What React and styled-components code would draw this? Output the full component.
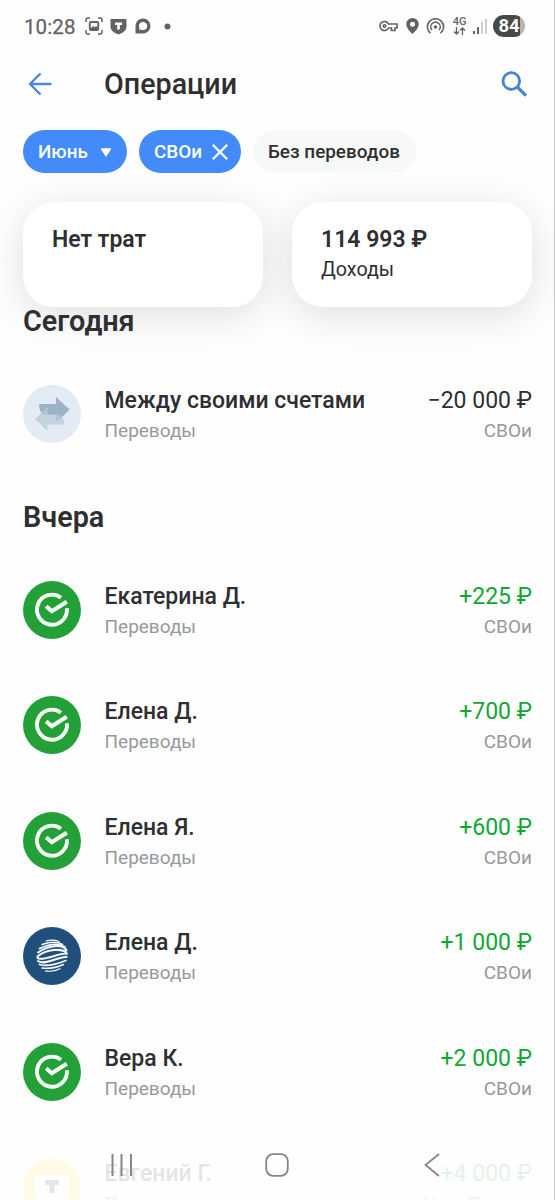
import React from 'react';
import styled, { createGlobalStyle } from 'styled-components';

const GlobalStyle = createGlobalStyle`
  * { box-sizing: border-box; }
  body { margin: 0; background: #fefefe; font-family: Roboto, "Liberation Sans", sans-serif; color: #2f2f31; }
`;

const Screen = styled.main`
  position: relative;
  width: 555px;
  height: 1200px;
  overflow: hidden;
  background: #fefefe;
  border-right: 1px solid #c4c4c4;
  display: flex;
  flex-direction: column;
`;

const StatusBar = styled.header`
  height: 52px;
  flex: none;
  display: flex;
  align-items: center;
  justify-content: space-between;
  padding: 0 29px 0 24px;
  color: #626262;
`;

const StatusGroup = styled.div`
  display: flex;
  align-items: center;
`;

const Clock = styled.span`
  font-size: 20.5px;
  line-height: 24px;
  width: 61px;
  padding-top: 1px;
  letter-spacing: 0.1px;
  -webkit-text-stroke: 0.25px currentColor;
`;

const StatusIcon = styled.svg`
  display: block;
  flex: none;
  margin-left: ${(p) => p.$gap || 0}px;
`;

const Network = styled.div`
  display: flex;
  flex-direction: column;
  align-items: center;
  width: 15px;
  margin-left: 7px;
  font-size: 11px;
  font-weight: 500;
  line-height: 10px;
`;

const Battery = styled.div`
  width: 32px;
  height: 22px;
  margin-left: 6px;
  border-radius: 11px;
  background: linear-gradient(90deg, #484848 84%, #b3b3b3 84%);
  color: #fff;
  font-size: 18.5px;
  font-weight: 700;
  line-height: 23px;
  text-align: center;
`;

const TitleBar = styled.div`
  height: 64px;
  flex: none;
  display: flex;
  align-items: center;
  padding: 0 27px 0 28px;
`;

const Title = styled.h1`
  flex: 1;
  margin: 0 0 0 52px;
  font-size: 28.7px;
  line-height: 34px;
  font-weight: 500;
`;

const Filters = styled.div`
  height: 58px;
  flex: none;
  display: flex;
  align-items: flex-start;
  gap: 12px;
  padding: 14px 23px 0;
`;

const Chip = styled.button`
  display: flex;
  align-items: center;
  justify-content: space-between;
  width: ${(p) => p.$width}px;
  height: 43px;
  padding: 1px ${(p) => p.$end || 15}px 0 15px;
  border: 0;
  border-radius: 22px;
  background: ${(p) => (p.$active ? '#438afa' : '#f7f8f8')};
  color: ${(p) => (p.$active ? '#fff' : '#2f2f31')};
  font: 500 18.9px/24px Roboto, "Liberation Sans", sans-serif;
  white-space: nowrap;
`;

const Summary = styled.section`
  flex: none;
  display: grid;
  grid-template-columns: 240px 240px;
  gap: 29px;
  padding: 28px 23px 0;
`;

const SummaryCard = styled.article`
  height: 105px;
  padding: 23px 29px;
  border-radius: 31px;
  background: #fff;
  box-shadow: 0 8px 40px rgba(0, 0, 0, 0.13);
`;

const SummaryValue = styled.div`
  font-size: 23px;
  font-weight: 600;
  line-height: 29px;
`;

const SummaryLabel = styled.div`
  margin-top: 2px;
  font-size: 19.7px;
  line-height: 28px;
`;

const DayTitle = styled.h2`
  position: relative;
  flex: none;
  height: 34px;
  margin: ${(p) => p.$top}px 0 19px;
  padding-left: 23px;
  font-size: 28.8px;
  line-height: 34px;
  font-weight: 600;
`;

const Row = styled.article`
  flex: none;
  height: 115.4px;
  display: flex;
  align-items: flex-start;
  padding: 28px 22px 0 23px;
`;

const Avatar = styled.svg`
  width: 58px;
  height: 58px;
  flex: none;
`;

const Details = styled.div`
  flex: 1;
  margin-left: 23.5px;
  padding-top: 1px;
`;

const Payment = styled.div`
  padding-top: 1px;
  text-align: right;
`;

const Name = styled.div`
  font-size: 23px;
  font-weight: 500;
  line-height: 30px;
  white-space: nowrap;
`;

const Amount = styled.div`
  font-size: 23px;
  line-height: 30px;
  color: ${(p) => (p.$income ? '#13a637' : '#2f2f31')};
  white-space: nowrap;
`;

const Note = styled.div`
  font-size: 19px;
  line-height: 30px;
  color: #95999f;
`;

const NavigationBar = styled.nav`
  position: absolute;
  inset: auto 0 0 0;
  height: 69px;
  display: flex;
  align-items: flex-start;
  padding: 22px 0 0 109px;
  background: rgba(254, 254, 254, 0.88);
`;

function TransferIcon() {
  return (
    <Avatar viewBox="0 0 58 58">
      <circle cx="29" cy="29" r="29" fill="#e3ebf4" />
      <path d="M16 19H33V12L46.5 24.5L33 38V30H21Q16 27 16 19Z" fill="#9bb3c4" />
      <path d="M24.5 22V29H34Q41 31 41.5 39.5H24.5V46L12 34Z" fill="#c2d3df" />
      <path d="M24.5 22V29H34Q37 30 38.5 32L33 37V30H21L18 28Z" fill="#b0c5d3" />
    </Avatar>
  );
}

function CheckIcon() {
  return (
    <Avatar viewBox="0 0 58 58">
      <circle cx="29" cy="29" r="29" fill="#23a038" />
      <path d="M38 16.7A15 15 0 1 0 43.9 27.2" fill="none" stroke="#f5fff5" strokeWidth="3.9" />
      <path d="M23.2 25.2L28.8 30.2L43.8 20.8" fill="none" stroke="#f5fff5" strokeWidth="4.2" />
    </Avatar>
  );
}

function GlobeIcon() {
  return (
    <Avatar viewBox="0 0 58 58">
      <circle cx="29" cy="29" r="29" fill="#214f7b" />
      <g fill="none" stroke="#f7fbff" strokeLinecap="round">
        <path d="M23 14Q30 12 36 14.5" strokeWidth="1.2" />
        <path d="M19 17.5Q32 13 39.5 17.5" strokeWidth="1.5" />
        <path d="M16.5 21.5Q33 14 42 20" strokeWidth="1.8" />
        <path d="M15 25.5C24 19 40 16 43.5 23.5" strokeWidth="2.1" />
        <path d="M14.5 29.5C23 22 40 21 43.5 26" strokeWidth="2.1" />
        <path d="M14.5 31C19 35 41 24 43.8 27" strokeWidth="2.1" />
        <path d="M15 34C22 39 36 29 43.5 30" strokeWidth="2.1" />
        <path d="M16.5 37.5Q26 40.5 42.8 33.5" strokeWidth="1.8" />
        <path d="M19 41Q29 42.5 40.5 37.5" strokeWidth="1.5" />
        <path d="M22.5 43.8Q30 45.3 37 41.7" strokeWidth="1.2" />
      </g>
    </Avatar>
  );
}

function ShieldBankIcon() {
  return (
    <Avatar viewBox="0 0 58 58">
      <circle cx="29" cy="29" r="29" fill="#ffe63c" />
      <path d="M12 17H46V32Q46 42 29 49Q12 42 12 32Z" fill="#fff" />
      <path d="M22 22H36V27H31.5V35H26.5V27H22Z" fill="#333" />
    </Avatar>
  );
}

const icons = { transfer: TransferIcon, check: CheckIcon, globe: GlobeIcon, shield: ShieldBankIcon };

function Operation({ icon, name, amount, income = true, category = 'Переводы', account = 'СВОи' }) {
  const Icon = icons[icon];
  return (
    <Row>
      <Icon />
      <Details>
        <Name>{name}</Name>
        <Note>{category}</Note>
      </Details>
      <Payment>
        <Amount $income={income}>{amount}</Amount>
        <Note>{account}</Note>
      </Payment>
    </Row>
  );
}

export default function App() {
  return (
    <>
      <GlobalStyle />
      <Screen>
        <StatusBar>
          <StatusGroup>
            <Clock>10:28</Clock>
            <StatusIcon width="18" height="18" viewBox="0 0 18 18" fill="none" stroke="currentColor" strokeWidth="1.5">
              <path d="M1 5V3Q1 1 3 1H5M13 1H15Q17 1 17 3V5M17 13V15Q17 17 15 17H13M5 17H3Q1 17 1 15V13" />
              <rect x="4.8" y="5" width="8.4" height="8" rx="1" strokeWidth="1.9" />
              <path d="M5 12L8 9L9.5 10.5L11 9L13 11V13H5Z" fill="currentColor" stroke="none" />
            </StatusIcon>
            <StatusIcon $gap={7} width="17" height="17" viewBox="0 0 17 17">
              <path d="M0.5 1H16.5V9Q16.5 14 8.5 16.5Q0.5 14 0.5 9Z" fill="currentColor" />
              <path d="M5 4.5H12V7H9.8V11.5H7.2V7H5Z" fill="#fff" />
            </StatusIcon>
            <StatusIcon $gap={8} width="16" height="16" viewBox="0 0 16 16">
              <path d="M0.5 15.5V7.8A7.5 7.5 0 1 1 8 15.5ZM8 3.9A4.1 4.1 0 0 0 4.5 10.2L4 12L5.8 11.4A4.1 4.1 0 1 0 8 3.9Z" fill="currentColor" fillRule="evenodd" />
            </StatusIcon>
            <StatusIcon $gap={13} width="7" height="7" viewBox="0 0 7 7">
              <circle cx="3.5" cy="3.5" r="3" fill="currentColor" />
            </StatusIcon>
          </StatusGroup>
          <StatusGroup>
            <StatusIcon width="19" height="12" viewBox="0 0 19 12" fill="none" stroke="currentColor" strokeWidth="1.6">
              <path d="M9.5 4H18V8H16V10.5H12.5V8H9.5A4.5 4.5 0 1 1 9.5 4Z" />
              <circle cx="5.5" cy="6" r="1.3" />
            </StatusIcon>
            <StatusIcon $gap={8} width="13" height="16" viewBox="0 0 13 16">
              <path d="M6.5 0A6.2 6.2 0 0 0 .3 6.2C.3 10 4 13.5 6.5 16C9 13.5 12.7 10 12.7 6.2A6.2 6.2 0 0 0 6.5 0ZM6.5 3.7A2.5 2.5 0 1 1 6.5 8.7A2.5 2.5 0 0 1 6.5 3.7Z" fill="currentColor" fillRule="evenodd" />
            </StatusIcon>
            <StatusIcon $gap={7} width="19" height="17" viewBox="0 0 19 17" fill="none" stroke="currentColor" strokeWidth="1.6">
              <path d="M4.5 15.2A8.1 8.1 0 1 1 14.5 15.2M6 12A4.7 4.7 0 1 1 13 12" />
              <circle cx="9.5" cy="9" r="1.8" fill="currentColor" stroke="none" />
            </StatusIcon>
            <Network>
              4G
              <StatusIcon width="13" height="8" viewBox="0 0 13 8" fill="none" stroke="currentColor" strokeWidth="1.3">
                <path d="M3.5 0V7M1 4.5L3.5 7L6 4.5M9.5 8V1M7 3.5L9.5 1L12 3.5" />
              </StatusIcon>
            </Network>
            <StatusIcon $gap={6} width="14" height="16" viewBox="0 0 14 16">
              <path d="M0 13H2V16H0ZM4 9H6V16H4Z" fill="currentColor" />
              <path d="M8 4H10V16H8ZM12 1H14V16H12Z" fill="#cdcdcd" />
            </StatusIcon>
            <Battery>84</Battery>
          </StatusGroup>
        </StatusBar>
        <TitleBar>
          <StatusIcon width="24" height="24" viewBox="0 0 24 24" fill="none" stroke="#4788df" strokeWidth="2.3">
            <path d="M23.5 12H2M12.5 1.5L2 12L12.5 22.5" />
          </StatusIcon>
          <Title>Операции</Title>
          <StatusIcon width="26" height="26" viewBox="0 0 26 26" fill="none" stroke="#4384d6" strokeWidth="2.8">
            <circle cx="10.3" cy="10" r="8.3" />
            <path d="M16.3 16L25 24.7" strokeWidth="3.2" />
          </StatusIcon>
        </TitleBar>
        <Filters>
          <Chip $active $width={104}>
            Июнь
            <StatusIcon width="12" height="9" viewBox="0 0 12 9">
              <path d="M1.5 1H10.5L6 7.8Z" fill="#fff" stroke="#fff" strokeWidth="1.3" strokeLinejoin="round" />
            </StatusIcon>
          </Chip>
          <Chip $active $width={102} $end={13}>
            СВОи
            <StatusIcon width="16" height="16" viewBox="0 0 16 16" fill="none" stroke="#fff" strokeWidth="2.4">
              <path d="M1.5 1.5L14.5 14.5M14.5 1.5L1.5 14.5" strokeLinecap="round" />
            </StatusIcon>
          </Chip>
          <Chip $width={163}>Без переводов</Chip>
        </Filters>
        <Summary>
          <SummaryCard>
            <SummaryValue>Нет трат</SummaryValue>
          </SummaryCard>
          <SummaryCard>
            <SummaryValue>114 993 ₽</SummaryValue>
            <SummaryLabel>Доходы</SummaryLabel>
          </SummaryCard>
        </Summary>
        <DayTitle $top={-3}>Сегодня</DayTitle>
        <Operation icon="transfer" name="Между своими счетами" amount="−20 000 ₽" income={false} />
        <DayTitle $top={27.6}>Вчера</DayTitle>
        <Operation icon="check" name="Екатерина Д." amount="+225 ₽" />
        <Operation icon="check" name="Елена Д." amount="+700 ₽" />
        <Operation icon="check" name="Елена Я." amount="+600 ₽" />
        <Operation icon="globe" name="Елена Д." amount="+1 000 ₽" />
        <Operation icon="check" name="Вера К." amount="+2 000 ₽" />
        <Operation icon="shield" name="Евгений Г." amount="+4 000 ₽" account="Наш Проект" />
        <NavigationBar>
          <StatusIcon width="26" height="24" viewBox="0 0 26 24" fill="none" stroke="#868686" strokeWidth="2">
            <path d="M3.5 1V23M12.5 1V23M22 1V23" />
          </StatusIcon>
          <StatusIcon $gap={130} width="24" height="24" viewBox="0 0 24 24" fill="none" stroke="#868686" strokeWidth="1.8">
            <rect x="1.2" y="1.2" width="21.6" height="21.6" rx="7" />
          </StatusIcon>
          <StatusIcon $gap={135} width="16" height="24" viewBox="0 0 16 24" fill="none" stroke="#868686" strokeWidth="1.8">
            <path d="M15 1L1.5 12L15 23" />
          </StatusIcon>
        </NavigationBar>
      </Screen>
    </>
  );
}
